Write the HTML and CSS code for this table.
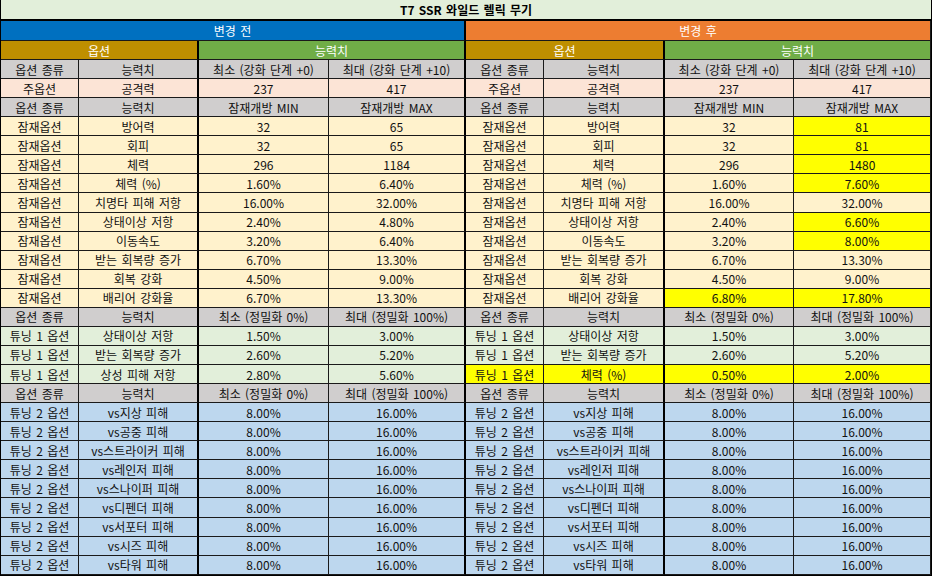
FILE: index.html
```html
<!DOCTYPE html>
<html lang="ko">
<head>
<meta charset="utf-8">
<title>T7 SSR 와일드 렐릭 무기</title>
<link rel="stylesheet" href="styles.css">
</head>
<body>
<div class="sheet">
  <div class="c title span8">T7 SSR 와일드 렐릭 무기</div>

  <div class="c before span4 t">변경 전</div>
  <div class="c after span4">변경 후</div>

  <div class="c opt span2 t">옵션</div>
  <div class="c stat span2 t">능력치</div>
  <div class="c opt span2 t">옵션</div>
  <div class="c stat span2">능력치</div>

  <div class="c h">옵션 종류</div><div class="c h t">능력치</div><div class="c h">최소 (강화 단계 +0)</div><div class="c h t">최대 (강화 단계 +10)</div>
  <div class="c h">옵션 종류</div><div class="c h t">능력치</div><div class="c h">최소 (강화 단계 +0)</div><div class="c h">최대 (강화 단계 +10)</div>

  <div class="c p">주옵션</div><div class="c p t">공격력</div><div class="c p">237</div><div class="c p t">417</div>
  <div class="c p">주옵션</div><div class="c p t">공격력</div><div class="c p">237</div><div class="c p">417</div>

  <div class="c h">옵션 종류</div><div class="c h t">능력치</div><div class="c h">잠재개방 MIN</div><div class="c h t">잠재개방 MAX</div>
  <div class="c h">옵션 종류</div><div class="c h t">능력치</div><div class="c h">잠재개방 MIN</div><div class="c h">잠재개방 MAX</div>

  <div class="c y">잠재옵션</div><div class="c y t">방어력</div><div class="c y">32</div><div class="c y t">65</div>
  <div class="c y">잠재옵션</div><div class="c y t">방어력</div><div class="c y">32</div><div class="c hl">81</div>

  <div class="c y">잠재옵션</div><div class="c y t">회피</div><div class="c y">32</div><div class="c y t">65</div>
  <div class="c y">잠재옵션</div><div class="c y t">회피</div><div class="c y">32</div><div class="c hl">81</div>

  <div class="c y">잠재옵션</div><div class="c y t">체력</div><div class="c y">296</div><div class="c y t">1184</div>
  <div class="c y">잠재옵션</div><div class="c y t">체력</div><div class="c y">296</div><div class="c hl">1480</div>

  <div class="c y">잠재옵션</div><div class="c y t">체력 (%)</div><div class="c y">1.60%</div><div class="c y t">6.40%</div>
  <div class="c y">잠재옵션</div><div class="c y t">체력 (%)</div><div class="c y">1.60%</div><div class="c hl">7.60%</div>

  <div class="c y">잠재옵션</div><div class="c y t">치명타 피해 저항</div><div class="c y">16.00%</div><div class="c y t">32.00%</div>
  <div class="c y">잠재옵션</div><div class="c y t">치명타 피해 저항</div><div class="c y">16.00%</div><div class="c y">32.00%</div>

  <div class="c y">잠재옵션</div><div class="c y t">상태이상 저항</div><div class="c y">2.40%</div><div class="c y t">4.80%</div>
  <div class="c y">잠재옵션</div><div class="c y t">상태이상 저항</div><div class="c y">2.40%</div><div class="c hl">6.60%</div>

  <div class="c y">잠재옵션</div><div class="c y t">이동속도</div><div class="c y">3.20%</div><div class="c y t">6.40%</div>
  <div class="c y">잠재옵션</div><div class="c y t">이동속도</div><div class="c y">3.20%</div><div class="c hl">8.00%</div>

  <div class="c y">잠재옵션</div><div class="c y t">받는 회복량 증가</div><div class="c y">6.70%</div><div class="c y t">13.30%</div>
  <div class="c y">잠재옵션</div><div class="c y t">받는 회복량 증가</div><div class="c y">6.70%</div><div class="c y">13.30%</div>

  <div class="c y">잠재옵션</div><div class="c y t">회복 강화</div><div class="c y">4.50%</div><div class="c y t">9.00%</div>
  <div class="c y">잠재옵션</div><div class="c y t">회복 강화</div><div class="c y">4.50%</div><div class="c y">9.00%</div>

  <div class="c y">잠재옵션</div><div class="c y t">배리어 강화율</div><div class="c y">6.70%</div><div class="c y t">13.30%</div>
  <div class="c y">잠재옵션</div><div class="c y t">배리어 강화율</div><div class="c hl">6.80%</div><div class="c hl">17.80%</div>

  <div class="c h">옵션 종류</div><div class="c h t">능력치</div><div class="c h">최소 (정밀화 0%)</div><div class="c h t">최대 (정밀화 100%)</div>
  <div class="c h">옵션 종류</div><div class="c h t">능력치</div><div class="c h">최소 (정밀화 0%)</div><div class="c h">최대 (정밀화 100%)</div>

  <div class="c g">튜닝 1 옵션</div><div class="c g t">상태이상 저항</div><div class="c g">1.50%</div><div class="c g t">3.00%</div>
  <div class="c g">튜닝 1 옵션</div><div class="c g t">상태이상 저항</div><div class="c g">1.50%</div><div class="c g">3.00%</div>

  <div class="c g">튜닝 1 옵션</div><div class="c g t">받는 회복량 증가</div><div class="c g">2.60%</div><div class="c g t">5.20%</div>
  <div class="c g">튜닝 1 옵션</div><div class="c g t">받는 회복량 증가</div><div class="c g">2.60%</div><div class="c g">5.20%</div>

  <div class="c g">튜닝 1 옵션</div><div class="c g t">상성 피해 저항</div><div class="c g">2.80%</div><div class="c g t">5.60%</div>
  <div class="c hl">튜닝 1 옵션</div><div class="c hl t">체력 (%)</div><div class="c hl">0.50%</div><div class="c hl">2.00%</div>

  <div class="c h">옵션 종류</div><div class="c h t">능력치</div><div class="c h">최소 (정밀화 0%)</div><div class="c h t">최대 (정밀화 100%)</div>
  <div class="c h">옵션 종류</div><div class="c h t">능력치</div><div class="c h">최소 (정밀화 0%)</div><div class="c h">최대 (정밀화 100%)</div>

  <div class="c b">튜닝 2 옵션</div><div class="c b t">vs지상 피해</div><div class="c b">8.00%</div><div class="c b t">16.00%</div>
  <div class="c b">튜닝 2 옵션</div><div class="c b t">vs지상 피해</div><div class="c b">8.00%</div><div class="c b">16.00%</div>

  <div class="c b">튜닝 2 옵션</div><div class="c b t">vs공중 피해</div><div class="c b">8.00%</div><div class="c b t">16.00%</div>
  <div class="c b">튜닝 2 옵션</div><div class="c b t">vs공중 피해</div><div class="c b">8.00%</div><div class="c b">16.00%</div>

  <div class="c b">튜닝 2 옵션</div><div class="c b t">vs스트라이커 피해</div><div class="c b">8.00%</div><div class="c b t">16.00%</div>
  <div class="c b">튜닝 2 옵션</div><div class="c b t">vs스트라이커 피해</div><div class="c b">8.00%</div><div class="c b">16.00%</div>

  <div class="c b">튜닝 2 옵션</div><div class="c b t">vs레인저 피해</div><div class="c b">8.00%</div><div class="c b t">16.00%</div>
  <div class="c b">튜닝 2 옵션</div><div class="c b t">vs레인저 피해</div><div class="c b">8.00%</div><div class="c b">16.00%</div>

  <div class="c b">튜닝 2 옵션</div><div class="c b t">vs스나이퍼 피해</div><div class="c b">8.00%</div><div class="c b t">16.00%</div>
  <div class="c b">튜닝 2 옵션</div><div class="c b t">vs스나이퍼 피해</div><div class="c b">8.00%</div><div class="c b">16.00%</div>

  <div class="c b">튜닝 2 옵션</div><div class="c b t">vs디펜더 피해</div><div class="c b">8.00%</div><div class="c b t">16.00%</div>
  <div class="c b">튜닝 2 옵션</div><div class="c b t">vs디펜더 피해</div><div class="c b">8.00%</div><div class="c b">16.00%</div>

  <div class="c b">튜닝 2 옵션</div><div class="c b t">vs서포터 피해</div><div class="c b">8.00%</div><div class="c b t">16.00%</div>
  <div class="c b">튜닝 2 옵션</div><div class="c b t">vs서포터 피해</div><div class="c b">8.00%</div><div class="c b">16.00%</div>

  <div class="c b">튜닝 2 옵션</div><div class="c b t">vs시즈 피해</div><div class="c b">8.00%</div><div class="c b t">16.00%</div>
  <div class="c b">튜닝 2 옵션</div><div class="c b t">vs시즈 피해</div><div class="c b">8.00%</div><div class="c b">16.00%</div>

  <div class="c b">튜닝 2 옵션</div><div class="c b t">vs타워 피해</div><div class="c b">8.00%</div><div class="c b t">16.00%</div>
  <div class="c b">튜닝 2 옵션</div><div class="c b t">vs타워 피해</div><div class="c b">8.00%</div><div class="c b">16.00%</div>
</div>
</body>
</html>
```

FILE: styles.css
```css
html, body {
  margin: 0;
  padding: 0;
  background: #ffffff;
}

.sheet {
  box-sizing: border-box;
  width: 932px;
  height: 576px;
  border-left: 1px solid #000;
  border-right: 1px solid #000;
  border-bottom: 1px solid #000;
  display: grid;
  grid-template-columns: 78px 120px 130px 137px 78px 121px 129px 137px;
  grid-template-rows: 21px 20px 19px repeat(27, 19.074px);
  font-family: "Noto Sans CJK KR", "Noto Sans", sans-serif;
  font-size: 12px;
  word-spacing: 1px;
  color: #111;
}

.c {
  box-sizing: border-box;
  display: flex;
  align-items: center;
  justify-content: center;
  border-right: 1px solid #1a1a1a;
  border-bottom: 1px solid #1a1a1a;
  line-height: 1;
  white-space: nowrap;
  overflow: hidden;
  padding-top: 1px;
}

.t {
  border-right: 2px solid #000;
}

.span8 { grid-column: span 8; }
.span4 { grid-column: span 4; }
.span2 { grid-column: span 2; }

.title {
  background: #e2efda;
  font-weight: 700;
  color: #000;
  border-right: 0;
  border-bottom: 2px solid #000;
}

.before {
  background: #0070c0;
  color: #fff;
}

.after {
  background: #ed7d31;
  color: #fff;
}

.opt {
  background: #bf8f00;
  color: #fff;
}

.stat {
  background: #70ad47;
  color: #fff;
}

.h { background: #d0cece; }
.p { background: #fce4d6; }
.y { background: #fff2cc; }
.g { background: #e2efda; }
.b { background: #bdd7ee; }
.hl { background: #ffff00; }
```
